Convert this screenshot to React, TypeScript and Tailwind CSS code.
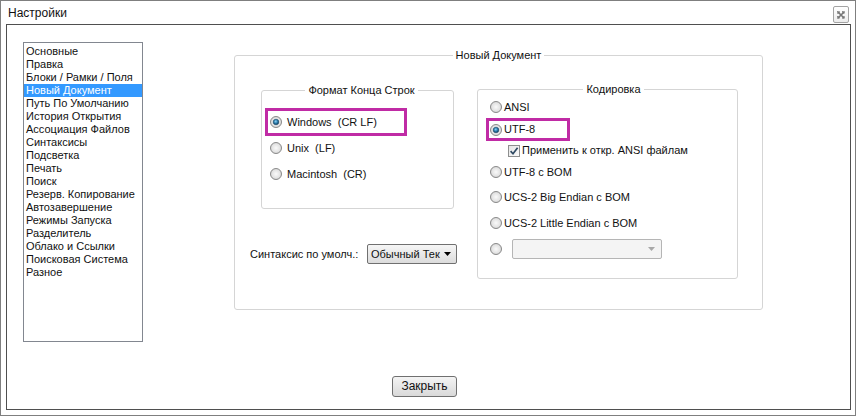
import React, { useId } from "react";

function Radio({ checked }: { checked?: boolean }) {
  const id = useId().replace(/[^a-zA-Z0-9]/g, "");
  return (
    <svg width="12" height="12" viewBox="0 0 12 12" className="shrink-0 block">
      <defs>
        <radialGradient id={`b${id}`} cx="50%" cy="50%" r="55%">
          <stop offset="0%" stopColor="#fafafa" />
          <stop offset="70%" stopColor="#e2e2e2" />
          <stop offset="100%" stopColor="#c4c4c4" />
        </radialGradient>
        <radialGradient id={`d${id}`} cx="45%" cy="40%" r="60%">
          <stop offset="0%" stopColor="#8fd3f5" />
          <stop offset="55%" stopColor="#2a7bab" />
          <stop offset="100%" stopColor="#0f3b5a" />
        </radialGradient>
      </defs>
      <circle cx="6" cy="6" r="5.5" fill={`url(#b${id})`} stroke="#8b8b8b" strokeWidth="1" />
      {checked && <circle cx="6" cy="6" r="2.8" fill={`url(#d${id})`} stroke="#1a4a6a" strokeWidth="0.6" />}
    </svg>
  );
}

function Check() {
  return (
    <svg width="12" height="12" viewBox="0 0 12 12" className="shrink-0 block">
      <defs>
        <linearGradient id="cbg" x1="0" y1="0" x2="1" y2="1">
          <stop offset="0%" stopColor="#e4e4e4" />
          <stop offset="100%" stopColor="#fbfbfb" />
        </linearGradient>
      </defs>
      <rect x="0.5" y="0.5" width="11" height="11" fill="url(#cbg)" stroke="#8e8f8f" />
      <path d="M2.6 6.2 L5 8.8 L9.6 2.8" fill="none" stroke="#2f4a63" strokeWidth="1.7" />
    </svg>
  );
}

function Arrow({ color }: { color: string }) {
  return (
    <svg width="7" height="4" viewBox="0 0 7 4" className="block">
      <path d="M0 0 L7 0 L3.5 4 Z" fill={color} />
    </svg>
  );
}

const items = [
  "Основные",
  "Правка",
  "Блоки / Рамки / Поля",
  "Новый Документ",
  "Путь По Умолчанию",
  "История Открытия",
  "Ассоциация Файлов",
  "Синтаксисы",
  "Подсветка",
  "Печать",
  "Поиск",
  "Резерв. Копирование",
  "Автозавершение",
  "Режимы Запуска",
  "Разделитель",
  "Облако и Ссылки",
  "Поисковая Система",
  "Разное",
];

export default function App() {
  return (
    <div className="w-[856px] h-[416px] bg-white border border-[#7f7f7f] flex flex-col text-[11px] leading-[13px] text-[#111] font-['Liberation_Sans',Arial,sans-serif]">
      {/* title bar */}
      <div className="h-[23px] flex items-center justify-between pl-[7px] pr-[6px]">
        <span className="text-[12px] leading-[14px] mt-[1px]">Настройки</span>
        <div className="w-[16px] h-[17px] mt-[4px] border border-[#a3a3a3] rounded-[2px] bg-gradient-to-b from-white to-[#ececec] flex items-center justify-center">
          <svg width="8" height="8" viewBox="0 0 8 8" className="block">
            <path d="M1 1 L7 7 M7 1 L1 7" stroke="#777" strokeWidth="1.6" />
            <rect x="0.5" y="0.5" width="2" height="2" fill="none" stroke="#777" strokeWidth="0.6" />
            <rect x="5.5" y="0.5" width="2" height="2" fill="none" stroke="#777" strokeWidth="0.6" />
            <rect x="0.5" y="5.5" width="2" height="2" fill="none" stroke="#777" strokeWidth="0.6" />
            <rect x="5.5" y="5.5" width="2" height="2" fill="none" stroke="#777" strokeWidth="0.6" />
          </svg>
        </div>
      </div>

      {/* content frame */}
      <div className="ml-[5px] mr-[4px] mb-[5px] flex-1 border border-[#4f4f4f] flex flex-col">
        <div className="flex items-start pt-[17px] pl-[16px]">
          {/* list */}
          <div className="w-[120px] h-[300px] border border-[#828790] pt-[2px] shrink-0">
            {items.map((t, i) => (
              <div
                key={t}
                className={
                  i === 3
                    ? "h-[13px] px-[2px] bg-[#3399ff] text-white whitespace-nowrap"
                    : "h-[13px] px-[2px] whitespace-nowrap"
                }
              >
                {t}
              </div>
            ))}
          </div>

          {/* main group */}
          <fieldset className="ml-[91px] mt-[7px] w-[529px] h-[261px] border border-[#d5d5d5] rounded-[3px] px-[15px] shrink-0">
            <legend className="mx-auto px-[3px] leading-[13px]">Новый Документ</legend>
            <div className="flex items-start">
              {/* left column */}
              <div className="w-[207px] shrink-0 flex flex-col">
                <fieldset className="ml-[11px] mt-[22px] w-[193px] h-[125px] border border-[#d5d5d5] rounded-[3px] pl-[8px] pt-[12px]">
                  <legend className="mx-auto px-[3px] leading-[13px]">Формат Конца Строк</legend>
                  <div className="relative h-[26px] flex items-center gap-[5px]">
                    <Radio checked />
                    <span className="whitespace-pre">Windows  (CR LF)</span>
                    <span className="absolute left-[-5px] top-[-1px] w-[142px] h-[28px] border-[3px] border-[#c02ba5] pointer-events-none" />
                  </div>
                  <div className="h-[26px] flex items-center gap-[5px]">
                    <Radio />
                    <span className="whitespace-pre">Unix  (LF)</span>
                  </div>
                  <div className="h-[26px] flex items-center gap-[5px]">
                    <Radio />
                    <span className="whitespace-pre">Macintosh  (CR)</span>
                  </div>
                </fieldset>
                <div className="mt-[35px] flex items-center h-[20px]">
                  <span className="w-[117px] shrink-0 whitespace-nowrap">Синтаксис по умолч.:</span>
                  <div className="w-[90px] h-[20px] border border-[#707070] rounded-[2px] bg-gradient-to-b from-[#f6f6f6] to-[#dcdcdc] flex items-center pl-[3px] pr-[5px]">
                    <span className="flex-1 whitespace-nowrap">Обычный Тек</span>
                    <span className="ml-[3px]"><Arrow color="#000" /></span>
                  </div>
                </div>
              </div>

              {/* encoding */}
              <fieldset className="ml-[20px] mt-[21px] w-[261px] h-[196px] border border-[#d5d5d5] rounded-[3px] pl-[12px] shrink-0">
                <legend className="mx-auto px-[3px] leading-[13px]">Кодировка</legend>
                <div className="h-[22px] flex items-center gap-[2px]">
                  <Radio />
                  <span>ANSI</span>
                </div>
                <div className="relative h-[23px] flex items-center gap-[2px]">
                  <Radio checked />
                  <span>UTF-8</span>
                  <span className="absolute left-[-4px] top-0 w-[84px] h-[23px] border-[3px] border-[#c02ba5] pointer-events-none" />
                </div>
                <div className="h-[19px] flex items-center gap-[2px] pl-[18px]">
                  <Check />
                  <span className="whitespace-nowrap">Применить к откр. ANSI файлам</span>
                </div>
                <div className="h-[24px] flex items-center gap-[2px]">
                  <Radio />
                  <span>UTF-8 с BOM</span>
                </div>
                <div className="h-[26px] flex items-center gap-[2px]">
                  <Radio />
                  <span className="whitespace-nowrap">UCS-2 Big Endian с BOM</span>
                </div>
                <div className="h-[26px] flex items-center gap-[2px]">
                  <Radio />
                  <span className="whitespace-nowrap">UCS-2 Little Endian с BOM</span>
                </div>
                <div className="h-[26px] flex items-center">
                  <Radio />
                  <div className="ml-[10px] w-[150px] h-[20px] border border-[#b5b5b5] rounded-[2px] bg-[#f4f4f4] flex items-center justify-end pr-[6px]">
                    <Arrow color="#a8a8a8" />
                  </div>
                </div>
              </fieldset>
            </div>
          </fieldset>
        </div>

        <div className="pl-[385px] mt-[34px]">
          <div className="w-[65px] h-[21px] border border-[#707070] rounded-[3px] bg-gradient-to-b from-[#f4f4f4] to-[#d9d9d9] flex items-center justify-center text-[12px]">
            Закрыть
          </div>
        </div>
      </div>
    </div>
  );
}
